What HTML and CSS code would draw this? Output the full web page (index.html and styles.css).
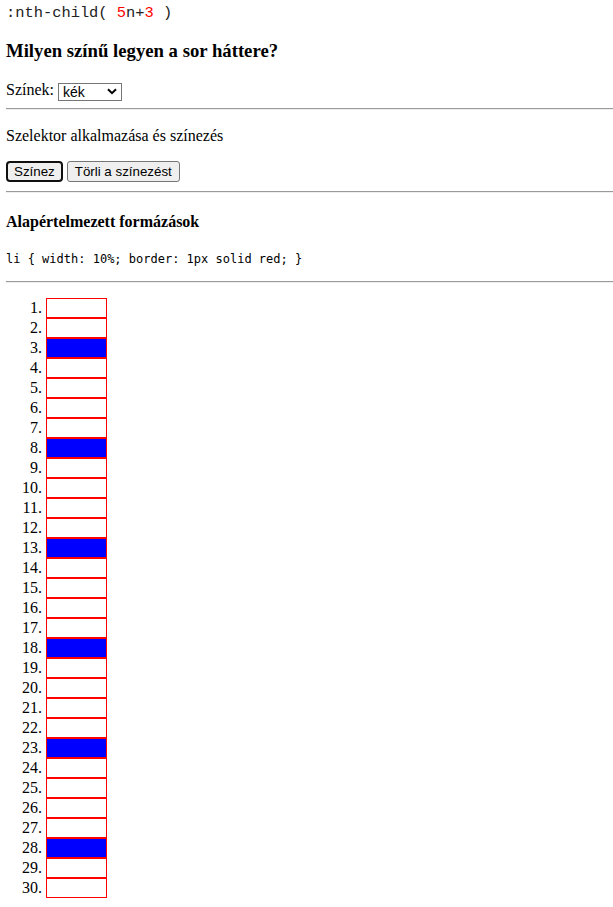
FILE: index.html
```html
<!DOCTYPE html>
<html lang="hu">
<head>
<meta charset="utf-8">
<title>nth-child</title>
<link rel="stylesheet" href="styles.css">
</head>
<body>
<div class="selector-title">:nth-child( <span class="num">5</span>n+<span class="num">3</span> )</div>
<h3 class="question">Milyen színű legyen a sor háttere?</h3>
<div class="color-row">
  <label class="color-label" for="szin">Színek:</label>
  <span class="select-wrap">
    <select id="szin" class="color-select">
      <option>kék</option>
      <option>piros</option>
      <option>zöld</option>
      <option>sárga</option>
    </select>
    <svg class="chevron" width="10" height="7" viewBox="0 0 10 7" aria-hidden="true"><path d="M1 1.2 L5 5.2 L9 1.2" fill="none" stroke="#000" stroke-width="2"/></svg>
  </span>
</div>
<hr class="rule rule-1">
<p class="apply-text">Szelektor alkalmazása és színezés</p>
<div class="button-row">
  <button class="btn btn-focus" type="button">Színez</button>
  <button class="btn" type="button">Törli a színezést</button>
</div>
<hr class="rule rule-2">
<h4 class="defaults">Alapértelmezett formázások</h4>
<p class="code-line">li { width: 10%; border: 1px solid red; }</p>
<hr class="rule rule-3">
<ol class="rows colored">
  <li></li><li></li><li></li><li></li><li></li>
  <li></li><li></li><li></li><li></li><li></li>
  <li></li><li></li><li></li><li></li><li></li>
  <li></li><li></li><li></li><li></li><li></li>
  <li></li><li></li><li></li><li></li><li></li>
  <li></li><li></li><li></li><li></li><li></li>
</ol>
</body>
</html>
```
FILE: styles.css
```css
html, body {
  margin: 0;
  padding: 0;
  background: #fff;
}
body {
  padding-left: 6px;
  font-family: "Liberation Serif", "Times New Roman", serif;
  font-size: 16px;
  color: #000;
}

.selector-title {
  margin: 4px 0 0;
  font-family: "Liberation Mono", "Courier New", monospace;
  font-size: 15.4px;
  line-height: 18px;
  white-space: pre;
  color: #222;
}
.num {
  color: #ff0000;
}

.question {
  margin: 18px 0 0;
  font-size: 18.72px;
  line-height: 22px;
  font-weight: bold;
}

.color-row {
  margin: 18px 0 0;
  display: flex;
  align-items: flex-start;
  gap: 4px;
  height: 20px;
}
.color-label {
  line-height: 20px;
}
.select-wrap {
  position: relative;
  display: block;
  margin-top: 3px;
}
.color-select {
  -webkit-appearance: none;
  appearance: none;
  display: block;
  box-sizing: border-box;
  width: 64px;
  height: 18px;
  margin: 0;
  padding: 1px 0 0 4px;
  border: 1px solid #767676;
  border-radius: 0;
  background: #fff;
  color: #000;
  font-family: "Liberation Sans", Arial, sans-serif;
  font-size: 14px;
  line-height: 15px;
}
.chevron {
  position: absolute;
  right: 5px;
  top: 5px;
  pointer-events: none;
}

.rule {
  height: 0;
  border: 0;
  border-top: 1px solid #9a9a9a;
  border-bottom: 1px solid #eeeeee;
}
.rule-1 {
  margin: 8px 0 0;
}
.apply-text {
  margin: 17px 0 0;
  line-height: 18px;
}

.button-row {
  margin: 16px 0 0;
  display: flex;
  gap: 4px;
  height: 21px;
}
.btn {
  box-sizing: border-box;
  height: 21px;
  margin: 0;
  padding: 0 7px;
  border: 1px solid #767676;
  border-radius: 3px;
  background: #efefef;
  color: #000;
  font-family: "Liberation Sans", Arial, sans-serif;
  font-size: 13.33px;
  line-height: 15px;
}
.btn-focus {
  padding: 0 6px;
  border: 2px solid #101010;
  border-radius: 4px;
}

.rule-2 {
  margin: 9px 0 0;
}
.defaults {
  margin: 20px 0 0;
  font-size: 16px;
  line-height: 18px;
  font-weight: bold;
}
.code-line {
  margin: 21px 0 0;
  font-family: "DejaVu Sans Mono", Consolas, monospace;
  font-size: 12px;
  line-height: 15px;
}
.rule-3 {
  margin: 14px 0 0;
}

.rows {
  margin: 15px 0 0;
  padding-left: 40px;
}
.rows li {
  box-sizing: content-box;
  width: 59px;
  height: 18px;
  line-height: 18px;
  border: 1px solid #ff0000;
}
.colored li:nth-child(5n+3) {
  background: #0000ff;
}
```
